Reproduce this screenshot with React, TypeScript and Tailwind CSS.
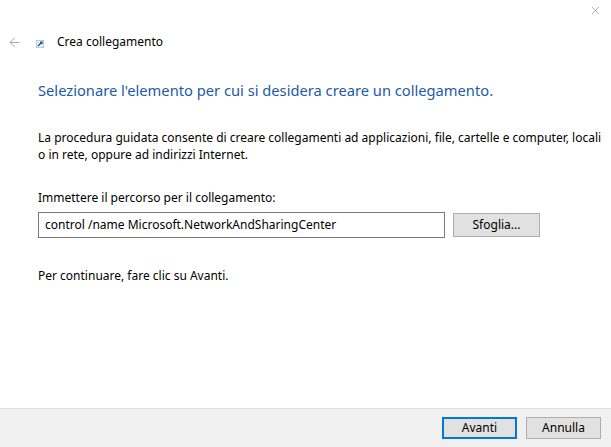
import { ArrowLeft, X } from 'lucide-react'

export default function App() {
  return (
    <div
      className="flex h-[447px] w-[611px] flex-col bg-white text-[12px] text-black"
      style={{ fontFamily: '"Noto Sans", "Liberation Sans", sans-serif' }}
    >
      <div className="flex h-[20px] justify-end pr-[9px] pt-[4px]">
        <X size={13} strokeWidth={1} className="text-gray-500" />
      </div>
      <div className="flex h-[44px] items-center pl-[7px]">
        <ArrowLeft size={15} strokeWidth={1.5} className="text-gray-400" />
        <svg width="8" height="8" viewBox="0 0 8 8" className="ml-[14px] mt-[4px]">
          <rect x="0" y="0" width="8" height="8" fill="#e8eef6" stroke="#7b9cc4" strokeWidth="0.8" />
          <path d="M2 6 L6 2 M4 2 H6 V4" stroke="#1d4f91" strokeWidth="1.2" fill="none" />
        </svg>
        <span className="ml-[13px]">Crea collegamento</span>
      </div>
      <div className="flex flex-1 flex-col pl-[38px] pr-[12px]">
        <h1 className="mt-[16px] text-[14.7px] leading-[20px] text-[#1c5aa8]">
          Selezionare l'elemento per cui si desidera creare un collegamento.
        </h1>
        <p className="mt-[29px] w-[565px] leading-[17px]">
          La procedura guidata consente di creare collegamenti ad applicazioni, file, cartelle e computer, locali o
          in rete, oppure ad indirizzi Internet.
        </p>
        <p className="mt-[26px] leading-[17px]">Immettere il percorso per il collegamento:</p>
        <div className="mt-[6px] flex items-center gap-[8px]">
          <div className="flex h-[26px] w-[407px] items-center border border-[#7a7a7a] px-[6px]">
            control /name Microsoft.NetworkAndSharingCenter
          </div>
          <button className="h-[24px] w-[87px] border border-[#adadad] bg-[#e1e1e1]">Sfoglia...</button>
        </div>
        <p className="mt-[29px]">Per continuare, fare clic su Avanti.</p>
      </div>
      <div className="flex h-[39px] items-center justify-end gap-[9px] border-t border-[#dfdfdf] bg-[#f0f0f0] pr-[10px]">
        <button className="h-[22px] w-[75px] border-2 border-[#0078d7] bg-[#e1e1e1]">Avanti</button>
        <button className="h-[22px] w-[75px] border border-[#adadad] bg-[#e1e1e1]">Annulla</button>
      </div>
    </div>
  )
}
